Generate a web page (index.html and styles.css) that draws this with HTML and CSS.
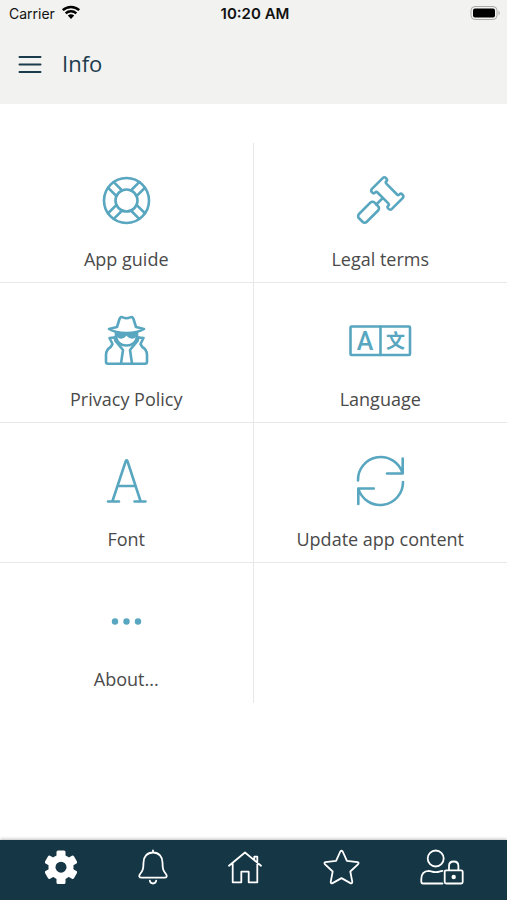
FILE: index.html
```html
<!DOCTYPE html>
<html lang="en">
<head>
<meta charset="utf-8">
<meta name="viewport" content="width=device-width, initial-scale=1">
<title>Info</title>
<link rel="stylesheet" href="styles.css">
</head>
<body>
<header class="header">
  <div class="status">
    <div class="status-left">
      <span>Carrier</span>
      <svg class="wifi" viewBox="0 0 20 16" aria-hidden="true">
        <path d="M1.8 6.2a12 12 0 0 1 16.4 0M4.7 9.3a7.8 7.8 0 0 1 10.6 0"/>
        <path class="solid" d="M6.8 11.6a4.8 4.8 0 0 1 6.4 0L10 15z"/>
      </svg>
    </div>
    <time class="clock">10:20 AM</time>
    <svg class="battery" viewBox="0 0 32 16" aria-hidden="true">
      <rect class="battery-shell" x="2" y="1.5" width="26" height="13" rx="4"/>
      <rect x="4" y="3.5" width="22" height="9" rx="2"/>
      <path class="battery-tip" d="M29.500 5.5q2.500 2.500 0 5z"/>
    </svg>
  </div>
  <div class="titlebar">
    <button class="menu" type="button" aria-label="Menu">
      <svg viewBox="0 0 24 20" aria-hidden="true"><path d="M1.5 3h21M1.5 10.500h21M1.5 18h21"/></svg>
    </button>
    <h1>Info</h1>
  </div>
</header>

<main class="grid">
  <a class="tile" href="#guide">
    <svg class="icon" viewBox="0 0 64 56" aria-hidden="true">
      <circle cx="32.500" cy="27.500" r="22.500"/><circle cx="32.500" cy="27.500" r="11"/>
      <g transform="translate(32.500 27.500) rotate(45)">
        <path d="M10.2-4H22M10.2 4H22M-10.2-4H-22M-10.2 4H-22M-4 10.2V22M4 10.2V22M-4-10.2V-22M4-10.2V-22"/>
      </g>
    </svg>
    <span>App guide</span>
  </a>
  <a class="tile" href="#legal">
    <svg class="icon" viewBox="0 0 64 56" aria-hidden="true">
      <g transform="translate(39.3 20.500) rotate(45)">
        <path d="M-11.500-10q2.200 0 2.200 2 0 1.800 2 1.800H7.300q2 0 2-1.800 0-2 2.200-2t2.600 2V8q0 2-2.600 2t-2.200-2q0-1.800-2-1.800H-7.300q-2 0-2 1.800 0 2-2.200 2t-2.600-2V-8q0-2 2.600-2zM0 6.200V15.500"/>
        <rect x="-5.500" y="15.500" width="11" height="22" rx="3"/>
      </g>
    </svg>
    <span>Legal terms</span>
  </a>
  <a class="tile" href="#privacy">
    <svg class="icon" viewBox="0 0 64 56" aria-hidden="true">
      <g transform="translate(.5 0)">
        <path d="M22.500 14 25 6q1-2.800 3.400-1.600 3.600 1.600 7.200 0Q38 3.200 39 6l2.500 8 8 2Q43 20 32 20T14.500 16z"/>
        <path d="M21.500 19.500v4.500q1.500 8.500 10.500 8.500t10.500-8.500v-4.500"/>
        <path class="glasses" d="M21.500 19.500h21q0 5.700-5 5.700-3.500 0-5.500-3.200-2 3.200-5.500 3.200-5 0-5-5.700z"/>
        <path d="M20 24.500l-5 .5 3 6-1.800 3Q11.500 36.500 11.500 42v6.700q0 2 2 2h37q2 0 2-2V42q0-5.500-4.700-8L46 31l3-6-5-.5"/>
        <path d="M20 24.500 21 28l7.500 9-2 13.500M44 24.500 43 28l-7.500 9 2 13.500"/>
      </g>
    </svg>
    <span>Privacy Policy</span>
  </a>
  <a class="tile" href="#language">
    <svg class="icon" viewBox="0 0 64 56" aria-hidden="true">
      <rect x="2.500" y="13.500" width="59.500" height="28.500" rx="1"/>
      <path d="M32.500 13.500V42"/>
      <text class="latin" x="17" y="37">A</text>
      <text class="han" x="47.500" y="35">文</text>
    </svg>
    <span>Language</span>
  </a>
  <a class="tile" href="#font">
    <svg class="icon" viewBox="0 0 64 56" aria-hidden="true">
      <path d="M14 48.500h11M40.500 48.500h11M18.500 48 31.800 8q.8-1.500 1.600 0L46.500 48M24 33h17.500"/>
    </svg>
    <span>Font</span>
  </a>
  <a class="tile" href="#update">
    <svg class="icon" viewBox="0 0 64 56" aria-hidden="true">
      <path d="M10 27.500A22.800 22.800 0 0 1 54.700 20.500M54.700 5.500v15H39M55 29A22.800 22.800 0 0 1 10.300 35.500M10.300 51V35.500h15.500"/>
    </svg>
    <span>Update app content</span>
  </a>
  <a class="tile" href="#about">
    <svg class="icon" viewBox="0 0 64 56" aria-hidden="true">
      <g class="fill"><circle cx="21" cy="28.500" r="3.200"/><circle cx="32.500" cy="28.500" r="3.200"/><circle cx="44" cy="28.500" r="3.200"/></g>
    </svg>
    <span>About...</span>
  </a>
  <div class="tile"></div>
</main>

<nav class="tabs" aria-label="Main">
  <a href="#settings" aria-label="Settings">
    <svg width="32" height="36" viewBox="0 0 32 36" aria-hidden="true">
      <g class="solid">
        <circle cx="16" cy="18.200" r="12.500"/>
        <rect x="11.500" y="1.500" width="9" height="33.400" rx="1.500"/>
        <rect x="11.500" y="1.500" width="9" height="33.400" rx="1.500" transform="rotate(60 16 18.200)"/>
        <rect x="11.500" y="1.500" width="9" height="33.400" rx="1.500" transform="rotate(120 16 18.200)"/>
      </g>
      <circle class="hole" cx="16" cy="18.200" r="5.500"/>
    </svg>
  </a>
  <a href="#alerts" aria-label="Notifications">
    <svg width="30" height="36" viewBox="0 0 30 36" aria-hidden="true">
      <path d="M15 1.500v2M15 3.500c-6 0-9.500 4.300-9.500 10 0 7-1 8.500-3.400 11.500-1.500 2-.8 3.700 1.400 3.700h23c2.200 0 2.900-1.700 1.400-3.700-2.400-3-3.400-4.500-3.400-11.500 0-5.700-3.500-10-9.500-10zM11.800 31.700q.5 2.800 3.200 2.800t3.200-2.800"/>
    </svg>
  </a>
  <a href="#home" aria-label="Home">
    <svg width="34" height="36" viewBox="0 0 34 36" aria-hidden="true">
      <path d="M1 16.700 17 3.500l16 13.200M4.700 14v19.300h8.600V22.700h7.400v10.600h8.600V7.700h-3v3"/>
    </svg>
  </a>
  <a href="#favourites" aria-label="Favourites">
    <svg width="37" height="36" viewBox="0 0 37 36" aria-hidden="true">
      <path d="M17.300 2.500q1.200-1.500 2.400 0l4.200 9.300 10.600 1.300q1.700.6.700 2l-7.900 7.400 2 10.400q-.2 1.900-1.900 1.200l-8.900-5-8.900 5q-1.700.7-1.900-1.200l2-10.400-7.900-7.400q-1-1.400.7-2l10.600-1.300z"/>
    </svg>
  </a>
  <a href="#account" aria-label="Account">
    <svg width="44" height="36" viewBox="0 0 44 36" aria-hidden="true">
      <circle cx="15.700" cy="9.500" r="8"/>
      <path d="M22.500 34.500H3q-1.700 0-1.700-1.700V30q0-8 7.500-8.200 1.200 0 2.500.6 4.400 1.600 8.700 0 1-.5 2.500-.6"/>
      <rect x="24.700" y="21.300" width="18" height="13.200" rx="1.500"/>
      <path d="M29 21v-4q0-4.500 4.700-4.500t4.700 4.500v4"/>
      <circle class="solid" cx="33.700" cy="28" r="2.200"/>
    </svg>
  </a>
</nav>
</body>
</html>
```
FILE: styles.css
```css
* {
  box-sizing: border-box;
}

body {
  margin: 0;
  min-height: 100vh;
  display: flex;
  flex-direction: column;
  background: #fff;
  color: #4a4a4a;
  font-family: "Open Sans", "Noto Sans", sans-serif;
}

svg {
  display: block;
}

.header {
  padding-bottom: 4px;
  background: #f2f2f0;
}

.status {
  display: grid;
  grid-template-columns: 1fr auto 1fr;
  align-items: center;
  height: 26px;
  padding: 0 6px 0 9px;
  color: #111;
  font-family: Inter, Roboto, sans-serif;
  font-size: 14px;
}

.status-left {
  display: flex;
  align-items: center;
  gap: 6px;
}

.wifi {
  width: 20px;
  height: 16px;
  margin-top: -2px;
  fill: none;
  stroke: #000;
  stroke-width: 2.5;
}

.wifi .solid {
  fill: #000;
  stroke: none;
}

.clock {
  font-size: 15px;
  font-weight: 600;
}

.battery {
  width: 32px;
  height: 16px;
  justify-self: end;
}

.battery-shell {
  fill: none;
  stroke: #aaa;
}

.battery-tip {
  fill: #aaa;
}

.titlebar {
  display: flex;
  align-items: center;
  gap: 20px;
  height: 74px;
  padding: 2px 18px 0;
  color: #1a3c4c;
}

.titlebar h1 {
  margin: 0;
  padding-bottom: 2px;
  font-size: 22px;
  line-height: 32px;
  font-weight: 400;
}

.menu {
  padding: 0;
  border: 0;
  background: none;
}

.menu svg {
  width: 24px;
  height: 20px;
  fill: none;
  stroke: #1a3c4c;
  stroke-width: 2;
  stroke-linecap: round;
}

.grid {
  flex: 1;
  display: grid;
  grid-template-columns: 1fr 1fr;
  align-content: start;
  padding-top: 39px;
}

.tile {
  display: flex;
  flex-direction: column;
  align-items: center;
  gap: 16px;
  min-height: 140px;
  padding: 30px 0 9px;
  border-bottom: 1px solid #e8e8e8;
  color: inherit;
  font-size: 18px;
  line-height: 28px;
  text-decoration: none;
}

.tile:nth-child(odd) {
  border-right: 1px solid #e8e8e8;
}

.tile:nth-last-child(-n+2) {
  border-bottom: 0;
}

.icon {
  width: 64px;
  height: 56px;
  fill: none;
  stroke: #58a6bf;
  stroke-width: 2.6;
  stroke-linecap: round;
  stroke-linejoin: round;
}

.icon .fill {
  fill: #58a6bf;
  stroke: none;
}

.icon .glasses {
  fill: #58a6bf;
  stroke-width: 1;
}

.icon text {
  fill: #58a6bf;
  stroke: none;
  text-anchor: middle;
}

.icon .latin {
  font: 500 25px Roboto, sans-serif;
}

.icon .han {
  font: 700 19px "Noto Sans CJK SC", sans-serif;
}

.tabs {
  display: flex;
  justify-content: space-between;
  height: 60px;
  padding: 9px 43px 0 45px;
  background: #143645;
  box-shadow: 0 -1px 3px rgba(0, 0, 0, 0.25);
}

.tabs svg {
  fill: none;
  stroke: #fff;
  stroke-width: 1.8;
  stroke-linecap: round;
  stroke-linejoin: round;
}

.tabs .solid {
  fill: #fff;
  stroke: none;
}

.tabs .hole {
  fill: #143645;
  stroke: none;
}
```
